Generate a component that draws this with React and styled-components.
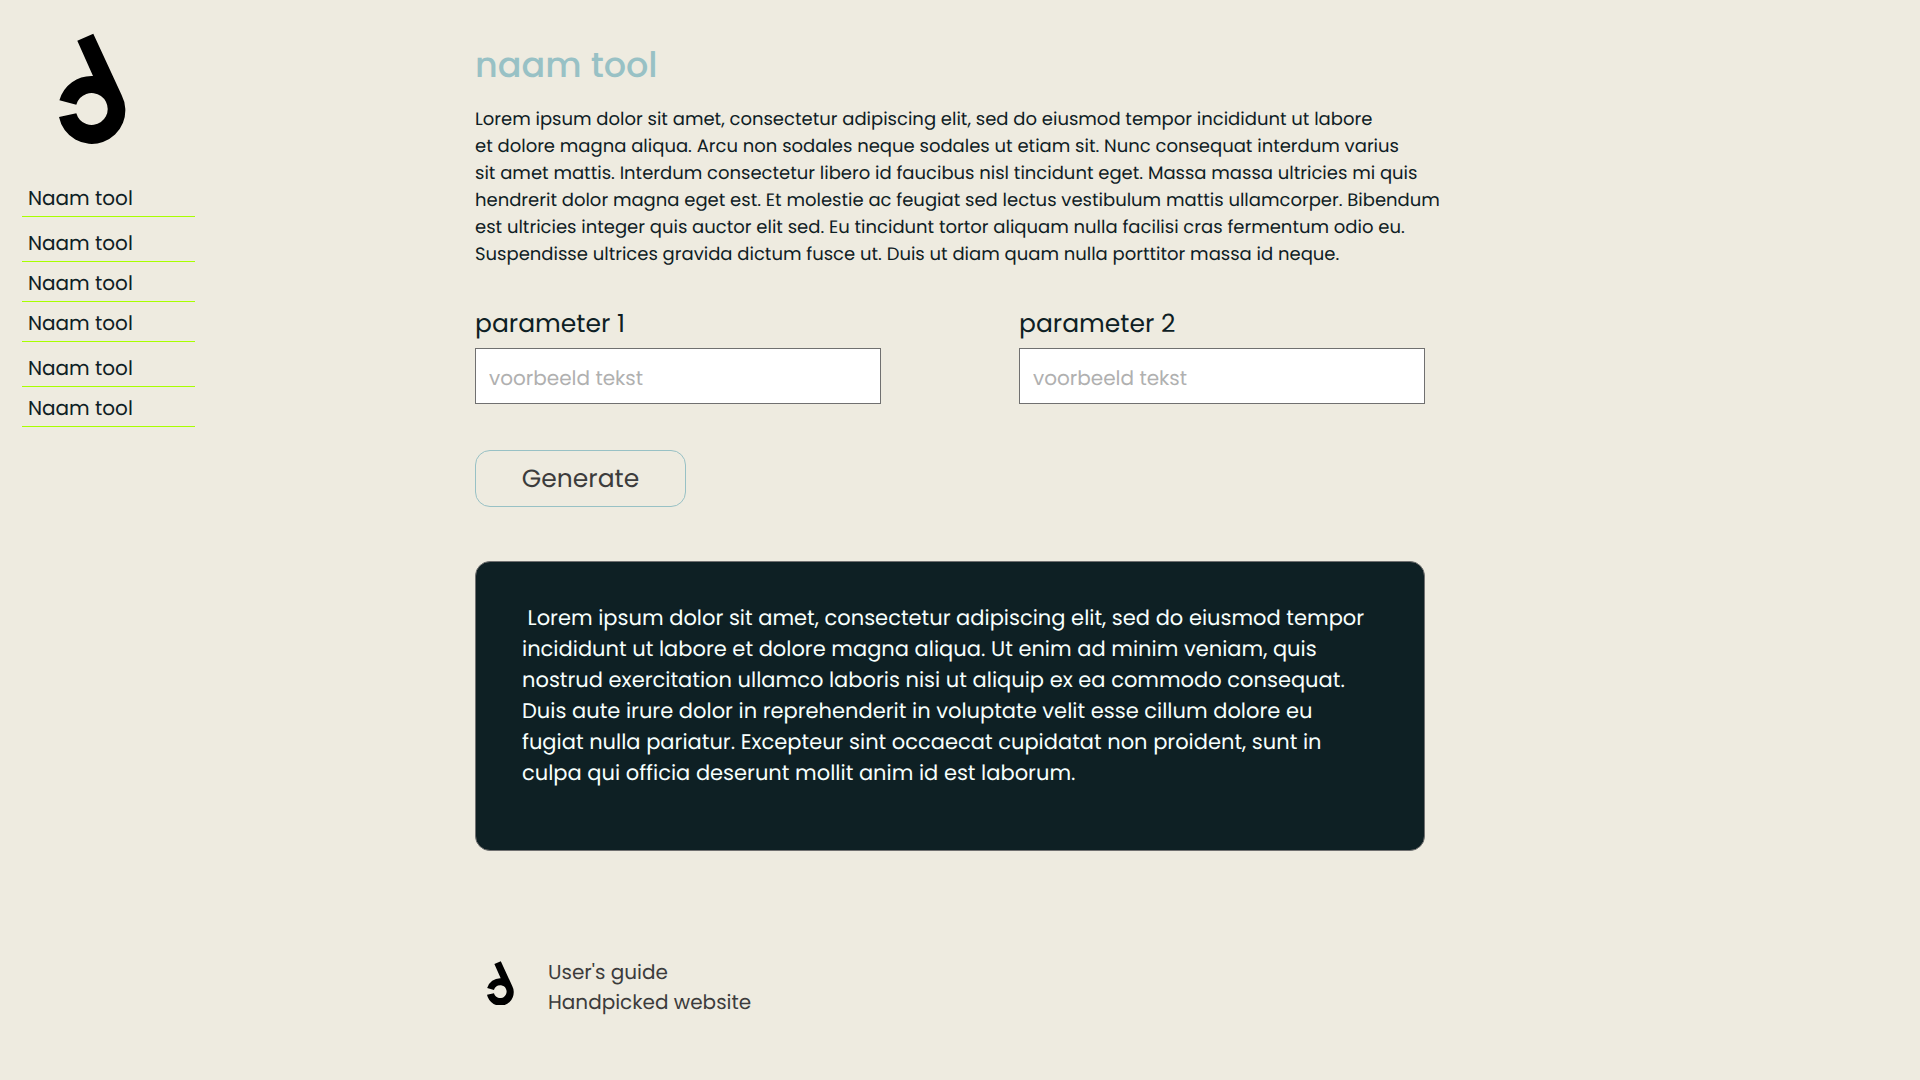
import React from "react";
import styled, { createGlobalStyle } from "styled-components";

const GlobalStyle = createGlobalStyle`
  *, *::before, *::after { box-sizing: border-box; }
  body {
    margin: 0;
    background: #eeebe0;
    color: #0e2024;
    font-family: Poppins, Inter, "Open Sans", sans-serif;
    font-weight: 400;
    text-rendering: geometricPrecision;
  }
`;

const Page = styled.div`
  display: flex;
  min-height: 100vh;
  padding: 33px 22px;
  gap: 280px;
`;

const Sidebar = styled.aside`
  flex: 0 0 173px;
`;

const HomeLink = styled.a`
  display: block;
  width: 67px;
  margin-left: 37px;
`;

const Mark = styled.svg`
  display: block;
  width: 100%;
`;

const Nav = styled.nav`
  display: flex;
  flex-direction: column;
  gap: 5px;
  margin-top: 33px;
`;

const NavLink = styled.a`
  display: block;
  height: 40px;
  padding-left: 6px;
  border-bottom: 1px solid #a8ff00;
  font-size: 20px;
  line-height: 42px;
  color: inherit;
  text-decoration: none;
`;

const Main = styled.main`
  flex: 0 1 950px;
  min-width: 0;
`;

const Title = styled.h1`
  margin: 8px 0 0;
  font-size: 35px;
  line-height: 50px;
  font-weight: 500;
  color: #98c1c5;
`;

const Intro = styled.p`
  margin: 15px 0 0;
  font-size: 18px;
  line-height: 27px;
  white-space: nowrap;
`;

const Fields = styled.div`
  display: grid;
  grid-template-columns: 1fr 1fr;
  gap: 138px;
  margin-top: 35px;
`;

const Field = styled.div`
  display: flex;
  flex-direction: column;
  gap: 4px;
`;

const Label = styled.label`
  font-size: 25px;
  line-height: 41px;
`;

const TextInput = styled.input`
  width: 100%;
  height: 56px;
  padding: 4px 13px 0;
  border: 1px solid #707070;
  border-radius: 0;
  background: #fff;
  font: inherit;
  font-size: 20px;
  color: inherit;
  text-rendering: inherit;

  &::placeholder {
    color: #b0b0b0;
    opacity: 1;
  }
`;

const Generate = styled.button`
  display: block;
  width: 211px;
  height: 57px;
  margin-top: 46px;
  border: 1px solid #98c1c5;
  border-radius: 15px;
  background: transparent;
  font: inherit;
  font-size: 25px;
  color: #3c3c3c;
  text-rendering: inherit;
`;

const Result = styled.section`
  min-height: 290px;
  margin-top: 54px;
  padding: 41px 46px;
  border: 1px solid #707070;
  border-radius: 15px;
  background: #0e2024;
  color: #f7fffd;
`;

const ResultText = styled.p`
  margin: 0;
  font-size: 21px;
  line-height: 31px;
  white-space: pre;
`;

const Footer = styled.footer`
  display: flex;
  align-items: center;
  gap: 34px;
  margin-top: 106px;
  padding-left: 12px;
`;

const FooterMark = styled.div`
  width: 27px;
  padding-bottom: 8px;
`;

const FooterLinks = styled.div`
  display: flex;
  flex-direction: column;
`;

const FooterLink = styled.a`
  font-size: 20px;
  line-height: 30px;
  color: #3c3c3c;
  text-decoration: none;
`;

const navGroups = [1, 3, 2];

const introLines = [
  "Lorem ipsum dolor sit amet, consectetur adipiscing elit, sed do eiusmod tempor incididunt ut labore",
  "et dolore magna aliqua. Arcu non sodales neque sodales ut etiam sit. Nunc consequat interdum varius",
  "sit amet mattis. Interdum consectetur libero id faucibus nisl tincidunt eget. Massa massa ultricies mi quis",
  "hendrerit dolor magna eget est. Et molestie ac feugiat sed lectus vestibulum mattis ullamcorper. Bibendum",
  "est ultricies integer quis auctor elit sed. Eu tincidunt tortor aliquam nulla facilisi cras fermentum odio eu.",
  "Suspendisse ultrices gravida dictum fusce ut. Duis ut diam quam nulla porttitor massa id neque.",
];

const resultLines = [
  " Lorem ipsum dolor sit amet, consectetur adipiscing elit, sed do eiusmod tempor",
  "incididunt ut labore et dolore magna aliqua. Ut enim ad minim veniam, quis",
  "nostrud exercitation ullamco laboris nisi ut aliquip ex ea commodo consequat.",
  "Duis aute irure dolor in reprehenderit in voluptate velit esse cillum dolore eu",
  "fugiat nulla pariatur. Excepteur sint occaecat cupidatat non proident, sunt in",
  "culpa qui officia deserunt mollit anim id est laborum.",
];

function Lines({ items }) {
  return items.map((line, i) => (
    <React.Fragment key={i}>
      {i > 0 && <br />}
      {line}
    </React.Fragment>
  ));
}

function Logo() {
  return (
    <Mark viewBox="0 0 67 111" aria-hidden="true">
      <path d="M0.4 67.3A33.5 33.5 0 0 1 34 43L18.3 7.7L34.3 0.7L62.6 62A33.5 33.5 0 1 1 0 84L17.3 80.3A16 16 0 1 0 17.3 71.7Z" />
    </Mark>
  );
}

export default function App() {
  return (
    <>
      <GlobalStyle />
      <Page>
        <Sidebar>
          <HomeLink href="#" aria-label="Handpicked">
            <Logo />
          </HomeLink>
          <Nav>
            {navGroups.map((count, g) => (
              <div key={g}>
                {Array.from({ length: count }, (_, i) => (
                  <NavLink key={i} href="#">Naam tool</NavLink>
                ))}
              </div>
            ))}
          </Nav>
        </Sidebar>
        <Main>
          <Title>naam tool</Title>
          <Intro><Lines items={introLines} /></Intro>
          <Fields>
            <Field>
              <Label htmlFor="parameter-1">parameter 1</Label>
              <TextInput id="parameter-1" placeholder="voorbeeld tekst" />
            </Field>
            <Field>
              <Label htmlFor="parameter-2">parameter 2</Label>
              <TextInput id="parameter-2" placeholder="voorbeeld tekst" />
            </Field>
          </Fields>
          <Generate type="button">Generate</Generate>
          <Result>
            <ResultText><Lines items={resultLines} /></ResultText>
          </Result>
          <Footer>
            <FooterMark><Logo /></FooterMark>
            <FooterLinks>
              <FooterLink href="#">User's guide</FooterLink>
              <FooterLink href="#">Handpicked website</FooterLink>
            </FooterLinks>
          </Footer>
        </Main>
      </Page>
    </>
  );
}
